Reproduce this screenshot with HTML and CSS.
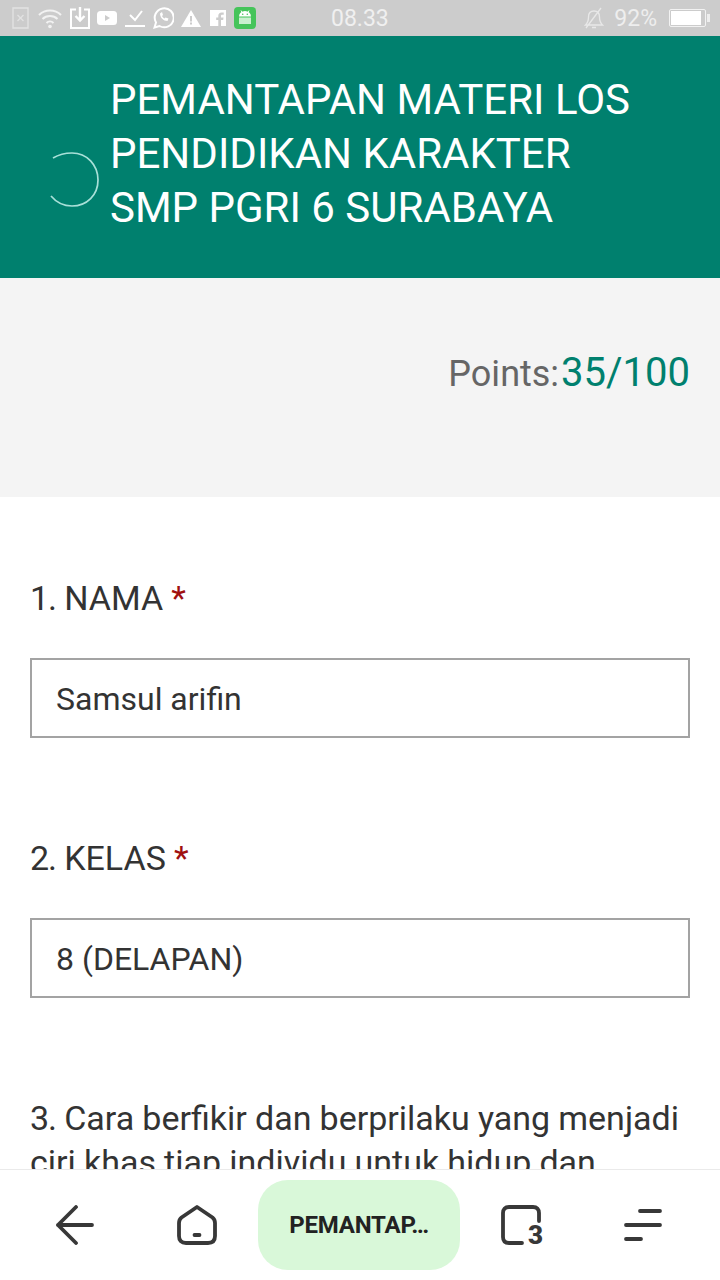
FILE: index.html
```html
<!DOCTYPE html>
<html lang="id">
<head>
<meta charset="utf-8">
<title>Pemantapan Materi LOS</title>
<link rel="stylesheet" href="styles.css">
</head>
<body>
<div class="app">
  <div class="status">
    <div class="status-icons">
      <svg width="19" height="22" viewBox="0 0 19 22"><path d="M1 1h15v20H1z" fill="none" stroke="#e2e2e2" stroke-width="1.400"/><path d="M5.500 8l6 6M11.500 8l-6 6" stroke="#e2e2e2" stroke-width="1.300"/></svg>
      <svg width="25" height="22" viewBox="0 0 25 22" fill="none" stroke="#f2f2f2" stroke-width="2"><path d="M1 8c6-6 16-6 22 0M4.500 12c4-4 11-4 15 0M8.500 16c2-2 5-2 7 0"/><circle cx="12" cy="19.500" r="1.800" fill="#f2f2f2" stroke="none"/></svg>
      <svg width="20" height="22" viewBox="0 0 20 22" fill="none" stroke="#fff" stroke-width="2"><path d="M6 2.500H1v18.500h18V2.500h-5"/><path d="M10 0v13M5.500 9l4.500 4.500L14.500 9" stroke-width="2.400"/></svg>
      <svg width="21" height="14" viewBox="0 0 21 14"><rect width="20" height="14" rx="3.500" fill="#fff"/><path d="M8 4l5 3-5 3z" fill="#ccc"/></svg>
      <svg width="21" height="18" viewBox="0 0 21 18" fill="none" stroke="#fff" stroke-width="2"><path d="M5 6l5 5 7-9M0 17h20"/></svg>
      <svg width="21" height="22" viewBox="0 0 21 22" fill="none" stroke="#fff" stroke-width="2"><path d="M1.500 20.500l1.500-5A9.500 9.500 0 1 1 6.500 19z"/><path d="M7 6.500c0 4 3.500 7.500 7.500 7.500l1-2.500-3-1-1 1c-1-.5-2-1.500-2.500-2.500l1-1-1-3z" fill="#fff" stroke="none"/></svg>
      <svg width="22" height="17" viewBox="0 0 22 17"><path d="M10 0l10 17H0z" fill="#fff"/><path d="M9 6h2v5.500H9zM9 12.500h2v2H9z" fill="#ccc"/></svg>
      <svg width="17" height="16" viewBox="0 0 17 16"><path d="M0 0h16v16h-5v-6h2.200l.3-2.500H11V6c0-.8.300-1.200 1.300-1.200h1.400V2.500h-2C9.500 2.500 8.300 3.800 8.300 5.800v1.700H6.200V10h2.100v6H0z" fill="#fff"/></svg>
      <svg width="22" height="22" viewBox="0 0 22 22"><rect width="22" height="22" rx="4" fill="#45c45a"/><path d="M5 9.500a6 5.500 0 0 1 12 0z" fill="#fff"/><path d="M7 3.500l1.500 2.500M15 3.500l-1.500 2.500" stroke="#fff"/><circle cx="8.700" cy="7.200" r=".8" fill="#45c45a"/><circle cx="13.300" cy="7.200" r=".8" fill="#45c45a"/><path d="M5 10.500h12v6.500H5z" fill="#c9f0ce"/></svg>
    </div>
    <div class="clock">08.33</div>
    <div class="status-right">
      <svg class="bell" width="20" height="22" viewBox="0 0 20 22" fill="none" stroke="#e8e8e8" stroke-width="1.300"><path d="M1.500 18c2-2 3-4 3-8s2.500-6 5.500-6 5.500 2 5.500 6 1 6 3 8zM8 20.500h4M2 21L17 1"/></svg>
      <span class="pct">92%</span>
      <span class="battery"><span class="battery-fill"></span></span>
      <span class="battery-tip"></span>
    </div>
  </div>

  <header class="banner">
    <svg class="spinner" width="52" height="60" viewBox="0 0 52 60" fill="none" stroke="#a8e0d8" stroke-width="1.700"><path d="M5 8C10 5 17 3 24 3C39 3 50 15 50 30C50 45 39 56 24 56C16 56 8 52 3 46"/></svg>
    <h1 class="title">PEMANTAPAN MATERI LOS<br>PENDIDIKAN KARAKTER<br>SMP PGRI 6 SURABAYA</h1>
  </header>

  <section class="points">
    <span class="points-label">Points:</span><span class="points-value">35/100</span>
  </section>

  <main class="form">
    <div class="question">
      <div class="q-label"><span class="num">1.</span> NAMA <span class="req">*</span></div>
      <div class="answer">Samsul arifin</div>
    </div>
    <div class="question">
      <div class="q-label"><span class="num">2.</span> KELAS <span class="req">*</span></div>
      <div class="answer">8 (DELAPAN)</div>
    </div>
    <div class="question">
      <div class="q-label"><span class="num">3.</span> Cara berfikir dan berprilaku yang menjadi ciri khas tiap individu untuk hidup dan bekerjasama</div>
    </div>
  </main>

  <nav class="nav">
    <svg class="nav-back" width="38" height="40" viewBox="0 0 38 40" fill="none" stroke="#383838" stroke-width="3.800" stroke-linecap="round" stroke-linejoin="round"><path d="M36 20H2M20 2L2 20l18 18"/></svg>
    <svg class="nav-home" width="40" height="40" viewBox="0 0 40 40" fill="none" stroke="#383838" stroke-width="3.800" stroke-linecap="round" stroke-linejoin="round"><path d="M20 2L35.500 12.500Q38 14.500 38 18V31Q38 38 31 38H9Q2 38 2 31V18Q2 14.500 4.500 12.500Z"/><path d="M17.500 30h5"/></svg>
    <div class="tab-pill">PEMANTAP…</div>
    <div class="tabs">
      <svg width="40" height="40" viewBox="0 0 40 40" fill="none" stroke="#383838" stroke-width="3.800" stroke-linecap="round" stroke-linejoin="round"><path d="M38 16V8Q38 2 32 2H8Q2 2 2 8V32Q2 38 8 38H21"/></svg>
      <span class="tab-count">3</span>
    </div>
    <svg class="nav-menu" width="38" height="32" viewBox="0 0 38 32" fill="none" stroke="#383838" stroke-width="3.800" stroke-linecap="round"><path d="M16 2h20M2 16h34M2 30h15"/></svg>
  </nav>
</div>
</body>
</html>
```
FILE: styles.css
```css
* { box-sizing: border-box; }
html, body { margin: 0; padding: 0; }
body { width: 720px; height: 1280px; overflow: hidden; background: #fff; font-family: Roboto, "Liberation Sans", sans-serif; }
.app { width: 720px; height: 1280px; display: flex; flex-direction: column; }

.status { height: 36px; flex: none; background: #cccccc; display: flex; align-items: center; position: relative; padding: 0 10px 0 12px; justify-content: space-between; }
.status-icons { display: flex; align-items: center; gap: 7px; }
.status-icons svg { display: block; }
.clock { position: absolute; left: 331px; top: 5px; font-size: 23px; line-height: 28px; color: #f0f0f0; }
.status-right { display: flex; align-items: center; }
.bell { margin-right: 10px; }
.pct { font-size: 23px; color: #eee; margin-right: 12px; }
.battery { width: 37px; height: 18px; border: 1.500px solid #f2f2f2; padding: 1px; display: block; border-radius: 2px; }
.battery-fill { display: block; width: 92%; height: 100%; background: #fff; }
.battery-tip { width: 3px; height: 8px; background: #eee; margin-left: 1px; }

.banner { height: 242px; flex: none; background: #00806e; display: flex; align-items: center; padding: 0 0 6px 48px; }
.spinner { flex: none; align-self: flex-start; margin: 114px 10px 0 0; }
.title { margin: 0; font-size: 42px; line-height: 54px; font-weight: 400; color: #fff; }

.points { height: 219px; flex: none; background: #f4f4f4; padding: 70px 30px 0; text-align: right; line-height: 50px; }
.points-label { color: #666; font-size: 36px; }
.points-value { color: #00806e; font-size: 40px; margin-left: 2px; }

.form { flex: 1; min-height: 0; overflow: hidden; padding: 79px 30px 0; }
.question { margin-bottom: 98px; }
.q-label { font-size: 34px; line-height: 44px; color: #333; word-spacing: -.3px; }
.num { letter-spacing: -1px; }
.req { color: #a01010; }
.answer { margin-top: 38px; height: 80px; border: 2px solid #a3a3a3; padding: 2px 24px 0; display: flex; align-items: center; font-size: 32px; color: #333; }

.nav { height: 111px; flex: none; background: #fff; border-top: 1px solid #eaeaea; display: flex; align-items: center; padding: 10px 0 10px 56px; }
.nav svg { display: block; flex: none; }
.nav-home { margin-left: 83px; }
.tab-pill { width: 202px; height: 90px; margin-left: 41px; border-radius: 30px; background: #d9f8d9; display: flex; align-items: center; justify-content: center; font-size: 24px; font-weight: 700; color: #222; letter-spacing: -.2px; }
.tabs { position: relative; width: 40px; height: 40px; margin-left: 41px; }
.tab-count { position: absolute; left: 27px; top: 17px; font-size: 26px; line-height: 26px; font-weight: 900; color: #383838; }
.nav-menu { margin-left: 83px; }
```
